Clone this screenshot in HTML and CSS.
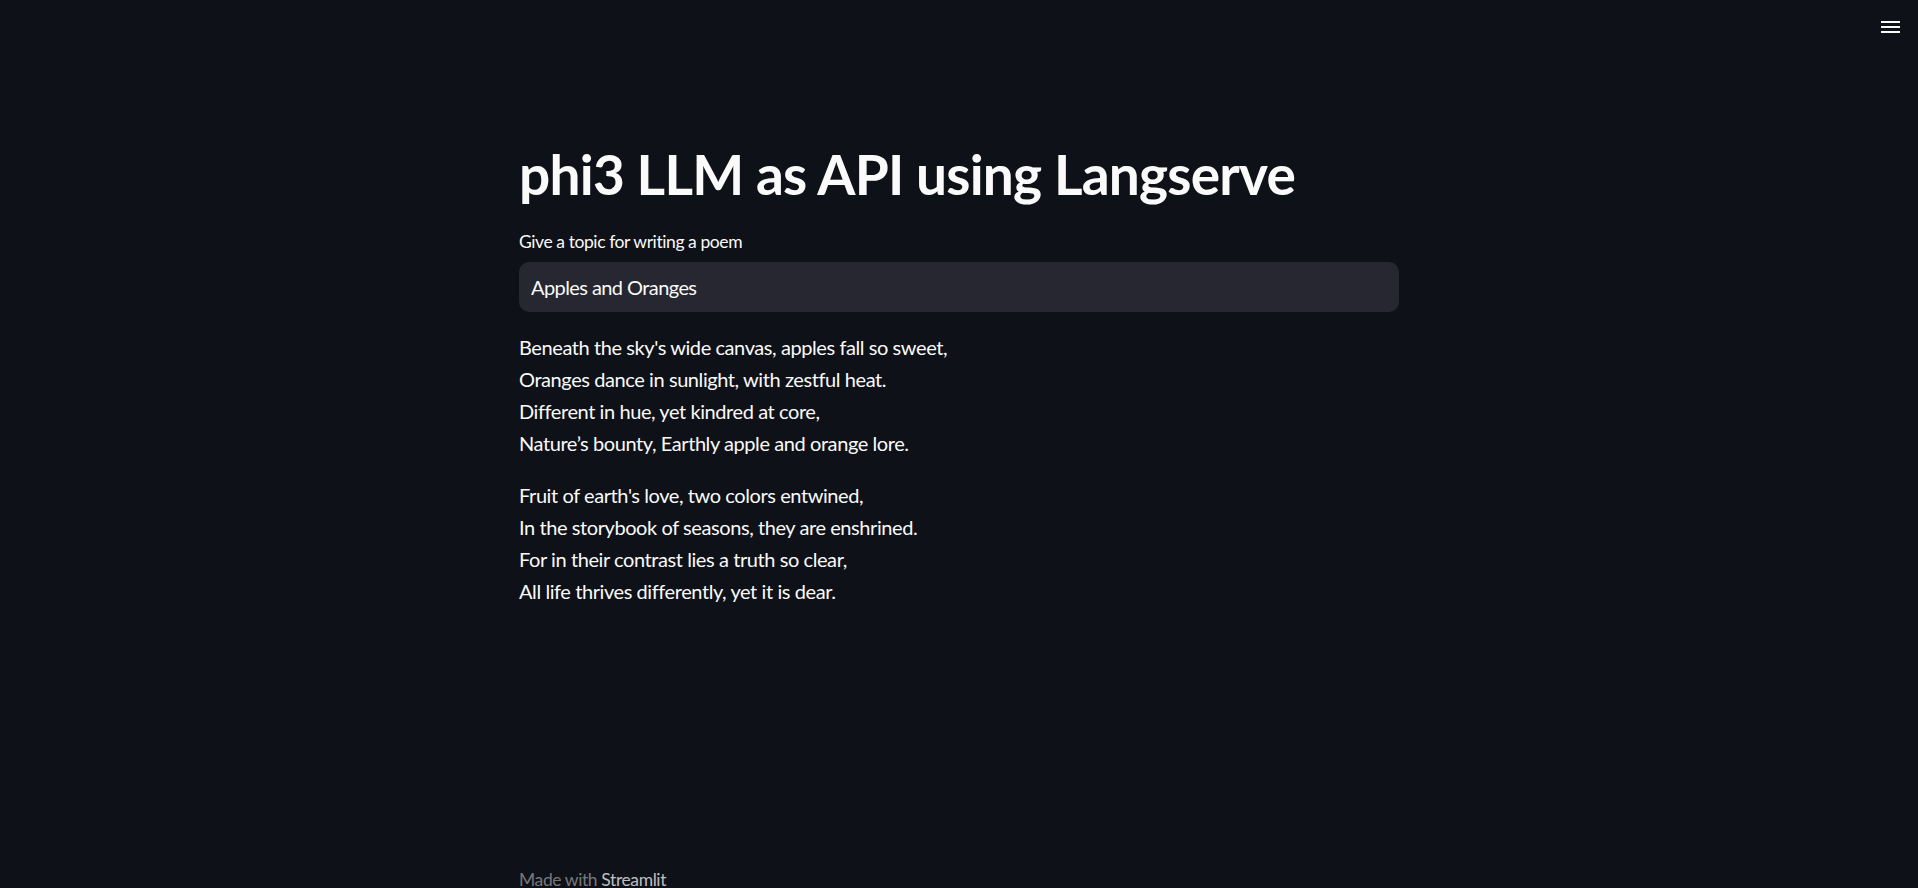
FILE: index.html
```html
<!DOCTYPE html>
<html lang="en">
<head>
<meta charset="utf-8">
<title>phi3 LLM as API using Langserve</title>
<link rel="stylesheet" href="styles.css">
</head>
<body>
<header class="toolbar">
  <button class="menu-btn" aria-label="Main menu">
    <svg width="19" height="13" viewBox="0 0 19 13"><rect x="0" y="0" width="19" height="2" fill="#fafafa"/><rect x="0" y="5" width="19" height="2" fill="#fafafa"/><rect x="0" y="10" width="19" height="2" fill="#fafafa"/></svg>
  </button>
</header>
<div class="page">
  <main class="block">
    <h1 class="title">phi3 LLM as API using Langserve</h1>
    <label class="label" for="topic">Give a topic for writing a poem</label>
    <div class="input-wrap"><input id="topic" class="input" type="text" value="Apples and Oranges"></div>
    <div class="poem">
      <p>Beneath the sky's wide canvas, apples fall so sweet,<br>Oranges dance in sunlight, with zestful heat.<br>Different in hue, yet kindred at core,<br>Nature’s bounty, Earthly apple and orange lore.</p>
      <p>Fruit of earth's love, two colors entwined,<br>In the storybook of seasons, they are enshrined.<br>For in their contrast lies a truth so clear,<br>All life thrives differently, yet it is dear.</p>
    </div>
  </main>
  <footer class="footer">Made with <span class="brand">Streamlit</span></footer>
</div>
</body>
</html>
```

FILE: styles.css
```css
* { box-sizing: border-box; }
html, body { margin: 0; padding: 0; }
body {
  background: #0e1117;
  color: #fafafa;
  font-family: "Lato", "Noto Sans", sans-serif;
  height: 888px;
  overflow: hidden;
}
.toolbar {
  position: fixed;
  top: 0;
  right: 0;
  padding: 21px 18px 0 0;
}
.menu-btn {
  background: none;
  border: 0;
  padding: 0;
  display: block;
  cursor: pointer;
}
.menu-btn svg { display: block; }
.page {
  height: 888px;
  display: flex;
  flex-direction: column;
}
.block {
  width: 880px;
  margin: 0 auto;
  padding-top: 141px;
}
.title {
  margin: 0;
  font-size: 55px;
  line-height: 66px;
  font-weight: 700;
  letter-spacing: -0.78px;
}
.label {
  display: block;
  margin-top: 24px;
  font-size: 17.5px;
  line-height: 22px;
  letter-spacing: -0.42px;
}
.input-wrap {
  margin-top: 9px;
  height: 50px;
  background: #262730;
  border-radius: 10px;
  display: flex;
  align-items: center;
}
.input {
  width: 100%;
  height: 100%;
  background: transparent;
  border: 0;
  outline: none;
  color: #fafafa;
  font-family: inherit;
  font-size: 20px;
  padding: 0 12px;
  letter-spacing: -0.58px;
}
.poem { margin-top: 19px; }
.poem p {
  margin: 0 0 20px;
  font-size: 20px;
  line-height: 32px;
  letter-spacing: -0.42px;
}
.footer {
  width: 880px;
  margin: auto auto -3px;
  font-size: 17.5px;
  line-height: 22px;
  color: rgba(250, 250, 250, 0.45);
  letter-spacing: -0.4px;
}
.brand { color: rgba(250, 250, 250, 0.75); }
```
